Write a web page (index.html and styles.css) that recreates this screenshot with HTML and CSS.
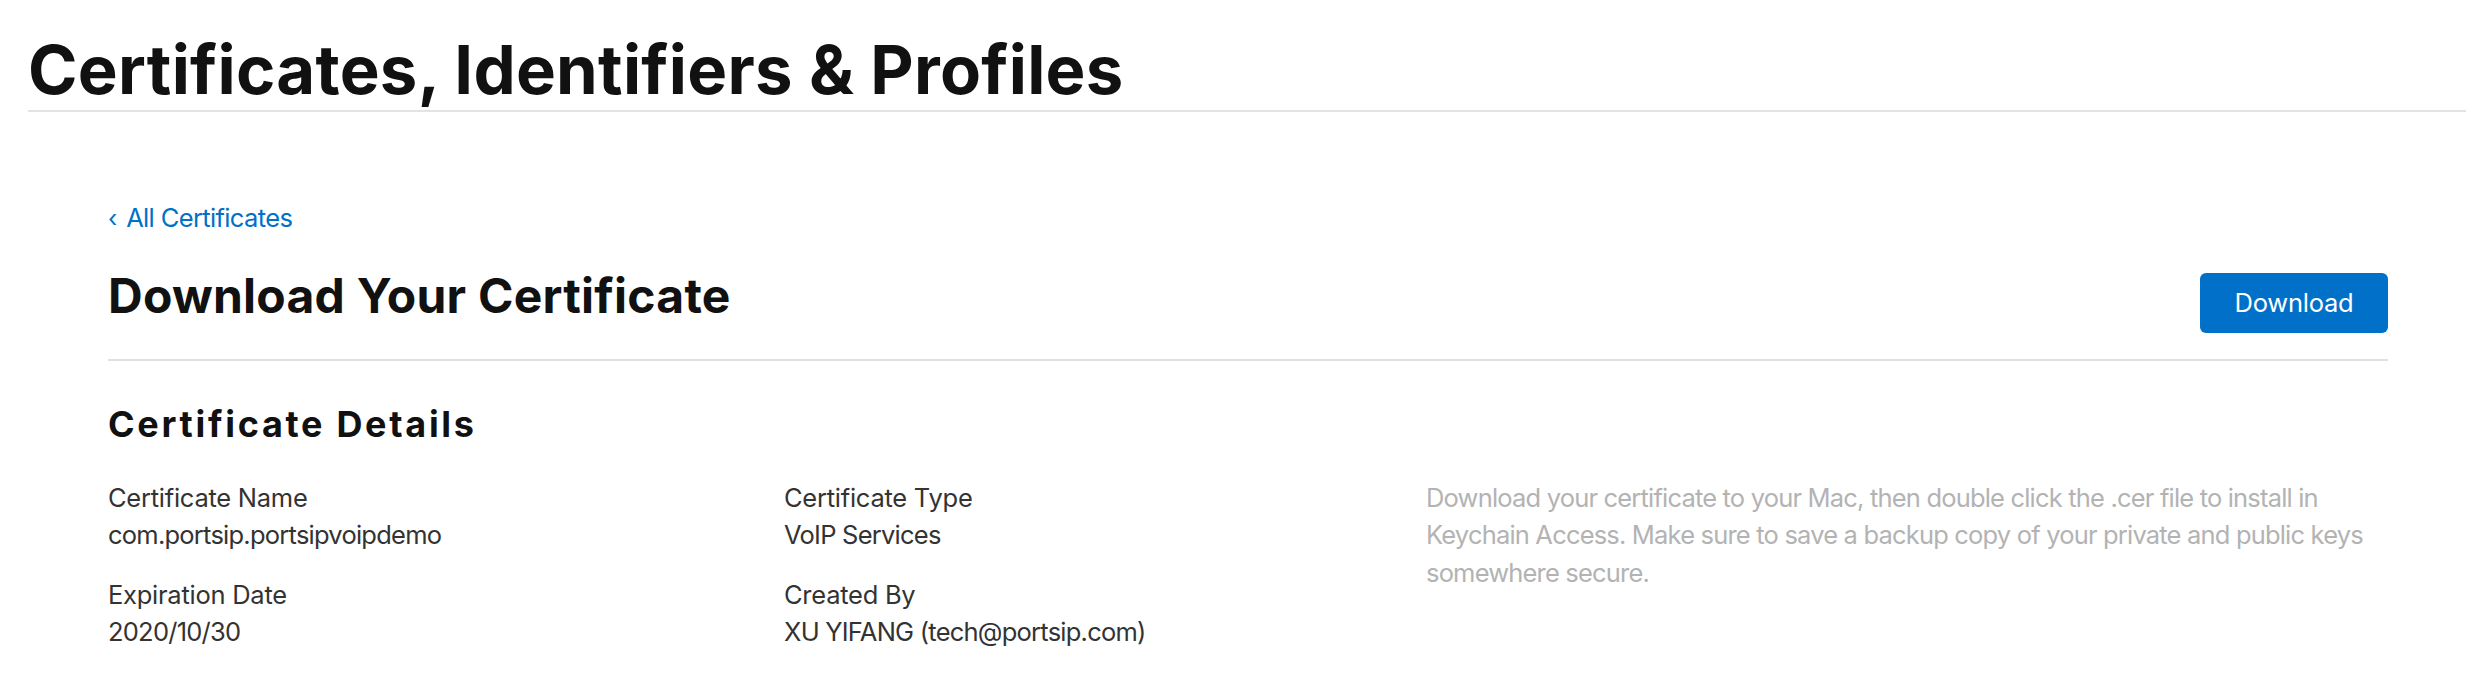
FILE: index.html
```html
<!DOCTYPE html>
<html>
<head>
  <meta charset="UTF-8">
  <title>Certificates, Identifiers &amp; Profiles</title>
  <link rel="stylesheet" href="styles.css">
</head>
<body>
  <div id="page">
    <div id="header">
      <h1 id="page-title">Certificates, Identifiers &amp; Profiles</h1>
    </div>

    <div id="content">
      <a class="back-link" href="#"><span class="chevron">‹</span> All Certificates</a>

      <div class="heading-row">
        <h2 class="heading">Download Your Certificate</h2>
        <button class="btn-primary">Download</button>
      </div>

      <h3 class="section-title">Certificate Details</h3>

      <div class="details">
        <div class="details-col">
          <div class="field">
            <div class="field-label">Certificate Name</div>
            <div class="field-value">com.portsip.portsipvoipdemo</div>
          </div>
          <div class="field">
            <div class="field-label">Expiration Date</div>
            <div class="field-value">2020/10/30</div>
          </div>
        </div>
        <div class="details-col">
          <div class="field">
            <div class="field-label">Certificate Type</div>
            <div class="field-value">VoIP Services</div>
          </div>
          <div class="field">
            <div class="field-label">Created By</div>
            <div class="field-value">XU YIFANG (tech@portsip.com)</div>
          </div>
        </div>
        <p class="details-note">Download your certificate to your Mac, then double click the .cer file to install in Keychain Access. Make sure to save a backup copy of your private and public keys somewhere secure.</p>
      </div>
    </div>
  </div>
</body>
</html>
```

FILE: styles.css
```css
body, html {
  margin: 0;
  padding: 0;
  background: #fff;
}

body {
  font-family: Inter, "Noto Sans", sans-serif;
  font-size: 25.5px;
  line-height: 37.5px;
  color: #333;
  letter-spacing: -0.01em;
}

#header {
  padding: 34px 18px 0 28px;
}

#page-title {
  margin: 0;
  font-size: 67px;
  line-height: 72px;
  font-weight: 700;
  color: #111;
  letter-spacing: 0.004em;
  padding-bottom: 4px;
  border-bottom: 2px solid #e3e3e3;
}

#content {
  padding: 87px 96px 40px 108px;
}

.back-link {
  display: block;
  color: #0070c9;
  text-decoration: none;
  letter-spacing: -0.025em;
}

.back-link .chevron {
  font-size: 24px;
  margin-right: 3px;
}

.heading-row {
  display: flex;
  justify-content: space-between;
  align-items: flex-start;
  margin-top: 30px;
  padding-bottom: 26px;
  border-bottom: 2px solid #e0e0e0;
}

.heading {
  margin: 0;
  font-size: 48px;
  line-height: 56px;
  font-weight: 700;
  color: #111;
  letter-spacing: 0.005em;
}

.btn-primary {
  margin-top: 5px;
  width: 188px;
  height: 60px;
  border: none;
  border-radius: 6px;
  background-color: #0070c9;
  color: #fff;
  font-family: inherit;
  font-size: 25.5px;
  letter-spacing: -0.01em;
  cursor: pointer;
}

.section-title {
  margin: 43px 0 0;
  font-size: 36px;
  line-height: 40px;
  font-weight: 700;
  color: #111;
  letter-spacing: 0.075em;
}

.details {
  display: grid;
  grid-template-columns: 676px 642px 1fr;
  margin-top: 35px;
}

.field + .field {
  margin-top: 22px;
}

.field-value {
  letter-spacing: -0.03em;
}

.details-note {
  margin: 0;
  color: #b3b3b3;
  letter-spacing: -0.032em;
}
```
